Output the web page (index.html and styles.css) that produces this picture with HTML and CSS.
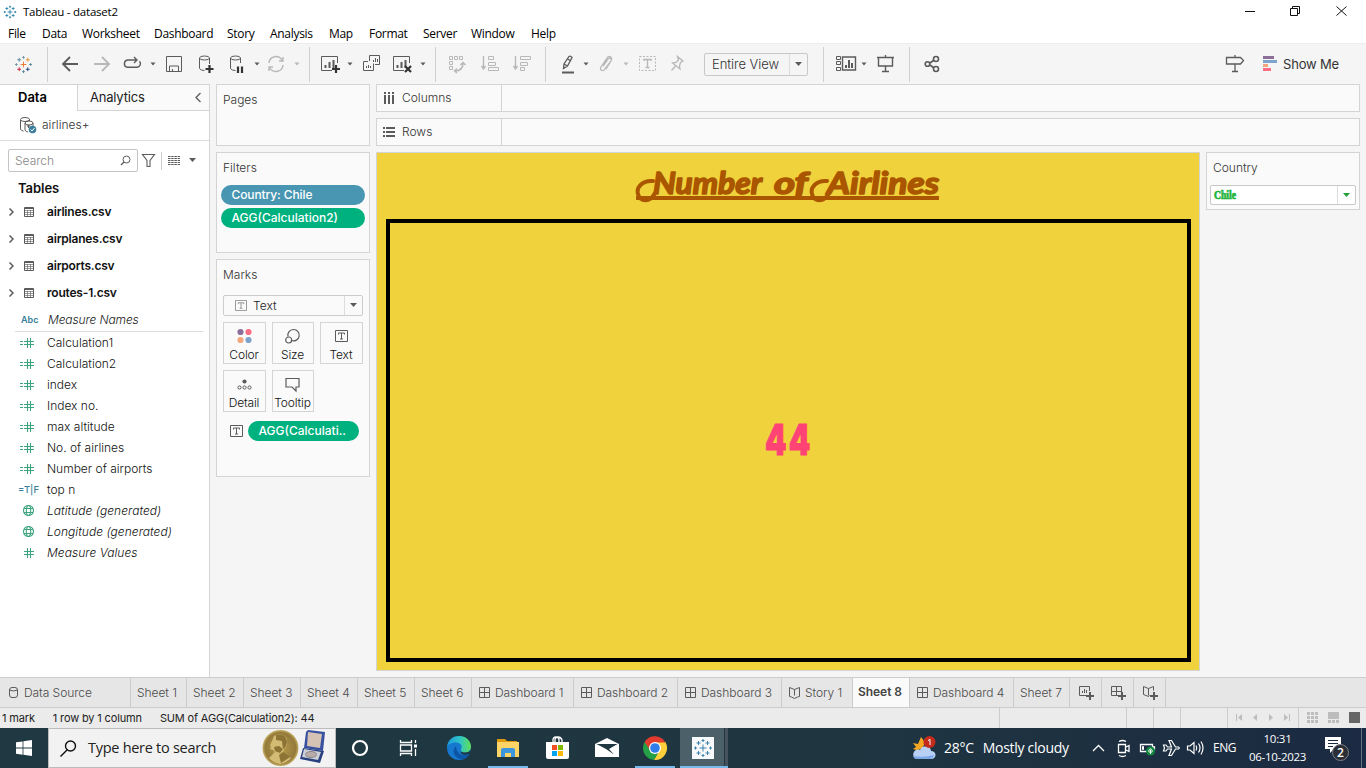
FILE: index.html
```html
<!DOCTYPE html>
<html lang="en">
<head>
<meta charset="utf-8">
<title>Tableau - dataset2</title>
<link rel="stylesheet" href="styles.css">
</head>
<body>
<svg class="defs" aria-hidden="true">
  <symbol id="tableau" viewBox="0 0 20 20"><path d="M10 6.500v7M6.500 10h7"/><path d="M5.500 3v4M3.500 5h4M14.500 3v4M12.500 5h4M5.500 13v4M3.500 15h4M14.500 13v4M12.500 15h4M10 1v3M8.500 2.500h3M10 16v3M8.500 17.500h3M1 10h3M2.500 8.500v3M16 10h3M17.500 8.500v3"/></symbol>
  <symbol id="caret" viewBox="0 0 6 20"><path d="M0.500 8.500h5l-2.500 3z" fill="currentColor" stroke="none"/></symbol>
  <symbol id="grid" viewBox="0 0 12 12"><path d="M.5.500h10v10H.5zM5.500.500v10M.5 5.500h10"/></symbol>
  <symbol id="book" viewBox="0 0 12 12"><path d="M5.500 2.500L3 1.500.5.500v9l2 .5 3 1.500 3-1.500 2-.5v-9l-2.500 1zM5.500 2.500v6"/></symbol>
  <symbol id="calc" viewBox="0 0 14 11"><path d="M0 4.500h3M0 7.500h3M4 4.500h10M4 7.500h10M7.500 1v10M10.500 1v10"/></symbol>
  <symbol id="hash" viewBox="0 0 14 11"><path d="M4 4.500h10M4 7.500h10M7.500 1v10M10.500 1v10"/></symbol>
  <symbol id="globe" viewBox="0 0 14 11"><circle cx="8.500" cy="5.500" r="5"/><path d="M4 3.500h9M4 7.500h9"/><ellipse cx="8.500" cy="5.500" rx="2.200" ry="5"/></symbol>
  <symbol id="table" viewBox="0 0 11 10"><path d="M.5.500h9v9H.5zM.5 1.500h9"/><path stroke-width=".6" d="M0 3.500h10M0 5.500h10M0 7.500h10M3.500 3v7M6.500 3v7"/></symbol>
  <symbol id="tbox" viewBox="0 0 13 12"><path d="M.5.500h12v11H.5z"/><path d="M3.500 4.500v-1.500h6v1.500M6.500 3v6M5 9h3"/></symbol>
  <symbol id="chev" viewBox="0 0 5 8"><path d="M.5.500L4 4 .5 7.500" stroke-width="1.500"/></symbol>
  <symbol id="chart" viewBox="0 0 20 20"><path d="M16.500 9V2.500H.5v14H11"/><path d="M4.500 14v-3M8.500 14V8M12.500 14V6" stroke-width="2"/></symbol>
</svg>

<header class="titlebar">
  <svg class="appicon line" viewBox="0 0 20 20"><use href="#tableau"/></svg>
  <span class="apptitle">Tableau - dataset2</span>
  <svg class="winbtns line" viewBox="0 0 104 12"><path d="M0 5.500h10M45.500 2.500h7v7h-7zM47.500 2V.5h7v7H53M91.500.500l10 9M101.500.500l-10 9"/></svg>
</header>

<nav class="menubar">
  <span>File</span><span>Data</span><span>Worksheet</span><span>Dashboard</span><span>Story</span><span>Analysis</span><span>Map</span><span>Format</span><span>Server</span><span>Window</span><span>Help</span>
</nav>

<div class="toolbar">
  <svg class="i logo line" viewBox="0 0 20 20"><path stroke="#e8762d" d="M10 7v6M7 10h6"/><path stroke="#c72035" d="M5.500 13v4M3.500 15h4"/><path stroke="#5b879b" d="M5.500 3v4M3.500 5h4"/><path stroke="#59879b" d="M10 16v3M8.500 17.500h3M17.500 8.500v3M16 10h3"/><path stroke="#1f457e" d="M14.500 13v4M12.500 15h4"/><path stroke="#eb912c" d="M14.500 3v4M12.500 5h4"/><path stroke="#7199a6" d="M10 1v3M8.500 2.500h3M1 10h3M2.500 8.500v3"/></svg>
  <i class="sep"></i>
  <svg class="i line thick" viewBox="0 0 20 20"><path d="M16 10H1M8 3L1 10l7 7"/></svg>
  <svg class="i line thick off" viewBox="0 0 20 20"><path d="M0 10h15M8 3l7 7-7 7"/></svg>
  <svg class="i line" viewBox="0 0 20 20"><path stroke-width="1.400" d="M14 6H4.500a3.700 3.700 0 0 0 0 7.300H14a3.600 3.600 0 0 0 2.500-6M11 3l3 3-3 3"/></svg>
  <svg class="c"><use href="#caret"/></svg>
  <svg class="i line" viewBox="0 0 20 20"><path d="M.5 2.500h15v15H.5zM3.500 17v-5h9v5M6.500 17v-2"/></svg>
  <svg class="i line" viewBox="0 0 20 20"><ellipse cx="5.500" cy="4" rx="5" ry="2"/><path d="M.5 4v10.500q1 2 5 2M10.500 4v6"/><path class="ink" d="M10.500 11v8M6.500 15h8"/></svg>
  <svg class="i line" viewBox="0 0 20 20"><ellipse cx="5.500" cy="4" rx="5" ry="2"/><path d="M.5 4v10.500q1 2 5 2M10.500 4v5"/><path class="ink" d="M8 12.500v6.500M12 12.500v6.500"/></svg>
  <svg class="c"><use href="#caret"/></svg>
  <svg class="i line off" viewBox="0 0 20 20"><path stroke-width="1.400" d="M2 9a7 7 0 0 1 13-3M16 3v4h-4M16 11a7 7 0 0 1-13 3M2 17v-4h4"/></svg>
  <svg class="c off"><use href="#caret"/></svg>
  <i class="sep"></i>
  <svg class="i line" viewBox="0 0 20 20"><use href="#chart"/><path class="ink" d="M15 11v8M11 15h8"/></svg>
  <svg class="c"><use href="#caret"/></svg>
  <svg class="i line" viewBox="0 0 20 20"><path d="M6.500 7V1.500h10v9H12M5 7.500H.5v9h10v-7M3.500 14v-2M5.500 14v-3M7.500 14v-2M10.500 8V6M12.500 8V4M14.500 8V5"/></svg>
  <svg class="i line" viewBox="0 0 20 20"><use href="#chart"/><path class="ink" d="M12 12l6 6M18 12l-6 6"/></svg>
  <svg class="c"><use href="#caret"/></svg>
  <i class="sep"></i>
  <svg class="i line off" viewBox="0 0 20 20"><path d="M1.500 2.500h3v3h-3zM6.500 2.500h3v3h-3zM11.500 2.500h3v3h-3zM1.500 7.500h3v3h-3zM1.500 12.500h3v3h-3z"/><path stroke-width="1.500" d="M7 17q8 0 8-8M12.500 11L15 8.500l2.500 2.500M9 14.500L6.500 17 9 19"/></svg>
  <svg class="i line off" viewBox="0 0 20 20"><path stroke-width="1.400" d="M2.500 2v13M.5 12l2 3 2-3"/><path d="M7.500 2.500h5v3h-5zM7.500 8.500h7v3h-7zM7.500 13.500h10v3h-10z"/></svg>
  <svg class="i line off" viewBox="0 0 20 20"><path stroke-width="1.400" d="M2.500 2v13M.5 12l2 3 2-3"/><path d="M7.500 2.500h10v3h-10zM7.500 8.500h7v3h-7zM7.500 13.500h4v3h-4z"/></svg>
  <i class="sep"></i>
  <svg class="i line" viewBox="0 0 20 20"><path stroke-width="1.300" d="M2.500 14.500l.5-4.500 5-7.500q1.500-1 3 1L6.500 12zM3 10l3.500 2M6.500 5l3.500 2"/><path stroke-width="2" d="M1 18.500h12"/></svg>
  <svg class="c"><use href="#caret"/></svg>
  <svg class="i line off" viewBox="0 0 20 20"><path stroke-width="1.300" d="M4 12l5-7c2-2 4 0 3 2l-6 8c-2 3-6 1-4-2l6-9c2-3 6-1 4 3l-5 8"/></svg>
  <svg class="c off"><use href="#caret"/></svg>
  <svg class="i line off" viewBox="0 0 20 20"><path stroke-dasharray="2 1.500" d="M.5 2.500h16v14H.5z"/><path d="M5 7V5.500h7V7M8.500 5v9M6.500 13.500h4" stroke-width="1.400"/></svg>
  <svg class="i line off" viewBox="0 0 20 20"><path stroke-width="1.300" d="M6.500 2.500l5.500 4.500-2.500 1.500-1 3.500.5 3-7.500-6 3.500-.5 2.500-2.500zM4.500 12L.5 16.500"/></svg>
  <div class="fit"><span>Entire View</span><b><svg class="arrow" viewBox="0 0 8 5"><path d="M0 0h7L3.500 4z"/></svg></b></div>
  <i class="sep"></i>
  <svg class="i line" viewBox="0 0 20 20"><path d="M.5 2.500h4v3h-4zM.5 7.500h4v3h-4zM.5 13.500h4v3h-4z"/><path stroke-width="1.400" d="M6.500 3h13v13h-13z"/><path stroke-width="2" d="M10 14v-3M13 14V6M16 14V9"/></svg>
  <svg class="c"><use href="#caret"/></svg>
  <svg class="i line" viewBox="0 0 20 20"><path stroke-width="1.400" d="M0 3.500h17M1.500 3v9h14V3M8.500 12v5.500M5 17.500h7M8.500 1v2"/></svg>
  <i class="sep"></i>
  <svg class="i line" viewBox="0 0 20 20"><g stroke-width="1.600"><circle cx="3.500" cy="10" r="2.300"/><circle cx="12" cy="5" r="2.500"/><circle cx="12" cy="15" r="2.500"/><path d="M6 9l4-3M6 11l4 3"/></g></svg>
  <svg class="i line" viewBox="0 0 20 20"><path stroke-width="1.300" d="M.5 3.500h14l3 3-3 3.500H.5zM9 1v2M9 10v8M6 17.500h6"/></svg>
  <span class="showme"><svg width="15" height="16" viewBox="0 0 15 16"><path fill="#8b6f98" d="M0 0h11v3H0z"/><path fill="#7ea3cc" d="M0 4h14v3H0z"/><path fill="#f5a67c" d="M0 8h5v3H0z"/><path fill="#fa6f85" d="M0 12h8v3H0z"/></svg><span>Show Me</span></span>
</div>

<main class="work">
  <aside class="side">
    <div class="sidetabs"><b>Data</b><span>Analytics<svg class="line" width="7" height="10" viewBox="0 0 7 10"><path stroke-width="1.300" d="M5.500 0L1 4.500 5.500 9"/></svg></span></div>
    <div class="source"><svg class="line" width="17" height="17" viewBox="0 0 17 17"><ellipse cx="5" cy="2.500" rx="4.500" ry="2"/><path d="M.5 3v9q1 2 3 2M9.500 2v2"/><ellipse cx="9" cy="6" rx="4" ry="2"/><path d="M5 6v7q1 2 3 2M13 6v3M7 9h3M8.500 8v3"/><circle cx="12.500" cy="12.500" r="3.800" fill="#3b7f9c" stroke="none"/><path stroke="#fff" d="M10.500 12.500l1.500 1.500 2.500-3"/></svg><span>airlines+</span></div>
    <div class="find">
      <div class="searchbox"><span>Search</span><svg class="line" width="11" height="11" viewBox="0 0 11 11"><circle cx="6.500" cy="4.500" r="3.500"/><path stroke-width="1.300" d="M4 7L1 10"/></svg></div>
      <svg class="line" width="13" height="13" viewBox="0 0 13 13"><path stroke-width="1.100" d="M.5.500h12l-4.500 6v6h-3v-6z"/></svg>
      <i></i>
      <svg class="line" width="12" height="10" viewBox="0 0 12 10"><path stroke-dasharray="2.500 .7" d="M0 .5h12M0 2.500h12M0 4.500h12M0 6.500h12M0 8.500h12"/></svg>
      <svg class="arrow" viewBox="0 0 8 5"><path d="M0 0h7L3.500 4z"/></svg>
    </div>
    <h2>Tables</h2>
    <ul class="tables">
      <li><svg class="chev line"><use href="#chev"/></svg><svg class="tab line"><use href="#table"/></svg><b>airlines.csv</b></li>
      <li><svg class="chev line"><use href="#chev"/></svg><svg class="tab line"><use href="#table"/></svg><b>airplanes.csv</b></li>
      <li><svg class="chev line"><use href="#chev"/></svg><svg class="tab line"><use href="#table"/></svg><b>airports.csv</b></li>
      <li><svg class="chev line"><use href="#chev"/></svg><svg class="tab line"><use href="#table"/></svg><b>routes-1.csv</b></li>
    </ul>
    <div class="names"><small>Abc</small><em>Measure Names</em></div>
    <ul class="fields">
      <li><svg><use href="#calc"/></svg><span>Calculation1</span></li>
      <li><svg><use href="#calc"/></svg><span>Calculation2</span></li>
      <li><svg><use href="#calc"/></svg><span>index</span></li>
      <li><svg><use href="#calc"/></svg><span>Index no.</span></li>
      <li><svg><use href="#calc"/></svg><span>max altitude</span></li>
      <li><svg><use href="#calc"/></svg><span>No. of airlines</span></li>
      <li><svg><use href="#calc"/></svg><span>Number of airports</span></li>
      <li><small>=T|F</small><span>top n</span></li>
      <li><svg><use href="#globe"/></svg><em>Latitude (generated)</em></li>
      <li><svg><use href="#globe"/></svg><em>Longitude (generated)</em></li>
      <li><svg><use href="#hash"/></svg><em>Measure Values</em></li>
    </ul>
  </aside>

  <section class="cards">
    <div class="card pages"><h3>Pages</h3></div>
    <div class="card filters"><h3>Filters</h3><p class="pill blue">Country: Chile</p><p class="pill">AGG(Calculation2)</p></div>
    <div class="card marks">
      <h3>Marks</h3>
      <div class="marktype"><svg class="line dim" width="12" height="11" viewBox="0 0 13 12"><use href="#tbox" width="13" height="12"/></svg><span>Text</span><b><svg class="arrow" viewBox="0 0 8 5"><path d="M0 0h7L3.500 4z"/></svg></b></div>
      <div class="markgrid">
        <div><svg width="15" height="15" viewBox="0 0 15 15"><circle cx="3.500" cy="3" r="3.100" fill="#8b6f98"/><circle cx="11.500" cy="3" r="3.100" fill="#fa6f85"/><circle cx="3.500" cy="11" r="3.100" fill="#f5a67c"/><circle cx="11.500" cy="11" r="3.100" fill="#7ea3cc"/></svg><span>Color</span></div>
        <div><svg class="line" width="15" height="15" viewBox="0 0 15 15"><path stroke-width="1.200" d="M3 7.500A5.700 5.700 0 1 1 6.500 11.500"/><circle cx="3.700" cy="11" r="3" stroke-width="1.200"/></svg><span>Size</span></div>
        <div><svg class="line" width="13" height="15" viewBox="0 0 13 15"><use href="#tbox" width="13" height="12" y="1"/></svg><span>Text</span></div>
        <div><svg class="line" width="15" height="15" viewBox="0 0 15 15"><circle cx="7.500" cy="4.500" r="2.100" fill="#5b5b5b" stroke="none"/><circle cx="2.500" cy="10.500" r="1.600"/><circle cx="7.500" cy="10.500" r="1.600"/><circle cx="12.500" cy="10.500" r="1.600"/></svg><span>Detail</span></div>
        <div><svg class="line" width="15" height="15" viewBox="0 0 15 15"><path stroke-width="1.200" d="M1 1.500h13v8.500h-3v4l-4-4H1z"/></svg><span>Tooltip</span></div>
      </div>
      <div class="encoded"><svg class="line" width="13" height="12" viewBox="0 0 13 12"><use href="#tbox" width="13" height="12"/></svg><p class="pill">AGG(Calculati..</p></div>
    </div>
  </section>

  <section class="view">
    <div class="shelf"><span><svg class="solid" width="12" height="12" viewBox="0 0 12 12"><path d="M1 0h2v2H1zM5 0h2v2H5zM9 0h2v2H9zM1 3h2v9H1zM5 3h2v9H5zM9 3h2v9H9z"/></svg>Columns</span></div>
    <div class="shelf"><span><svg class="solid" width="12" height="12" viewBox="0 0 12 12"><path d="M0 1h2v2H0zM0 5h2v2H0zM0 9h2v2H0zM3 1h9v2H3zM3 5h9v2H3zM3 9h9v2H3z"/></svg>Rows</span></div>
    <div class="stage">
      <div class="viz">
        <svg class="vtitle" viewBox="0 0 340 60" width="340" height="60">
          <path d="M33 22C23 21 16 28 18 35C20 43 30 44 35 34M207 22C197 21 190 28 192 35C194 43 204 44 209 34" />
          <path class="rule" d="M16 39h303"/>
          <text x="33" y="35" textLength="109" lengthAdjust="spacingAndGlyphs">Number</text>
          <text x="154" y="35" textLength="34" lengthAdjust="spacingAndGlyphs">of</text>
          <text x="207" y="35" textLength="112" lengthAdjust="spacingAndGlyphs">Airlines</text>
        </svg>
        <div class="pane"><svg width="60" height="44" viewBox="0 0 60 44"><text transform="translate(6 36) scale(.73 1)">44</text></svg></div>
      </div>
      <div class="legend"><h3>Country</h3><div class="pick"><svg width="24" height="14" viewBox="0 0 24 14"><text x="0" y="11" textLength="22" lengthAdjust="spacingAndGlyphs">Chile</text></svg><b><svg class="arrow" viewBox="0 0 8 5"><path d="M0 0h7L3.500 4z"/></svg></b></div></div>
    </div>
  </section>
</main>

<div class="sheets">
  <span class="ds"><svg class="line" width="9" height="12" viewBox="0 0 9 12"><rect x=".5" y=".5" width="8" height="10" rx="2.500"/><path d="M.5 3q4 2 8 0"/></svg>Data Source</span>
  <span>Sheet 1</span><span>Sheet 2</span><span>Sheet 3</span><span>Sheet 4</span><span>Sheet 5</span><span>Sheet 6</span>
  <span class="ic"><svg class="line"><use href="#grid"/></svg>Dashboard 1</span>
  <span class="ic"><svg class="line"><use href="#grid"/></svg>Dashboard 2</span>
  <span class="ic"><svg class="line"><use href="#grid"/></svg>Dashboard 3</span>
  <span class="ic"><svg class="line"><use href="#book"/></svg>Story 1</span>
  <span class="on">Sheet 8</span>
  <span class="ic"><svg class="line"><use href="#grid"/></svg>Dashboard 4</span>
  <span>Sheet 7</span>
  <span class="add"><svg class="line" viewBox="0 0 16 16"><path d="M10.500 6V1.500H.5v9H7M3.500 8V6M5.500 8V4M7.500 8V5"/><path stroke-width="2" d="M11 7v8M7 11h8"/></svg></span>
  <span class="add"><svg class="line" viewBox="0 0 16 16"><path d="M10.500 6V1.500H.5v9H7M5.500 1v9M0 6.500h11"/><path stroke-width="2" d="M11 7v8M7 11h8"/></svg></span>
  <span class="add"><svg class="line" viewBox="0 0 16 16"><path d="M5.500 3.500L.5 1.500v8l5 2 1-1M5.500 3.500v7M5.500 3.500l5-2v4"/><path stroke-width="2" d="M11 7v8M7 11h8"/></svg></span>
</div>

<div class="status">
  <span class="msg"><span>1 mark</span><span>1 row by 1 column</span><span>SUM of AGG(Calculation2): 44</span></span>
  <i></i><i></i><i></i><i></i>
  <i><svg width="54" height="8" viewBox="0 0 54 8" fill="#bdbdbd"><path d="M0 0h1v7H0zM6 0v7L2 3.500zM21 0v7l-4-3.500zM33 0v7l4-3.500zM48 0v7l4-3.500zM53 0h1v7h-1z"/></svg></i>
  <i class="modes"><svg width="54" height="11" viewBox="0 0 54 11" fill="#bdbdbd"><path d="M0 0h3v3H0zM4 0h3v3H4zM8 0h3v3H8zM0 4h3v3H0zM4 4h3v3H4zM8 4h3v3H8zM0 8h3v3H0zM4 8h3v3H4zM8 8h3v3H8zM21 0h11v7H21zM21 8h3v3h-3zM25 8h3v3h-3zM29 8h3v3h-3z"/><path fill="#666" d="M42 0h11v11H42z"/></svg></i>
</div>

<footer class="taskbar">
  <div class="start"><svg width="16" height="16" viewBox="0 0 16 16" fill="#fff"><path d="M0 2.300l6.600-.9v6.200H0zM7.400 1.300L16 0v7.600H7.400zM0 8.400h6.600v6.300L0 13.800zM7.400 8.400H16V16l-8.600-1.200z"/></svg></div>
  <div class="winsearch">
    <svg class="line dark" width="17" height="17" viewBox="0 0 17 17"><circle cx="10.500" cy="6" r="5" stroke-width="1.400"/><path stroke-width="1.500" d="M7 10L.5 16.500"/></svg>
    <span>Type here to search</span>
    <svg class="award" width="66" height="38" viewBox="0 0 66 38"><defs><radialGradient id="gold"><stop offset="0" stop-color="#b99d50"/><stop offset=".85" stop-color="#94793a"/><stop offset="1" stop-color="#c7b166"/></radialGradient></defs><circle cx="18.500" cy="19" r="18" fill="url(#gold)"/><path fill="#d2bb72" d="M12 7q8-4 13 3 1 6-3 10l-1 4 8 5q-4 5-11 6-7-1-11-6l6-6-2-2-3-1 1-2-1-2 2-4z"/><path fill="#8d7334" d="M14 6q9-2 11 6 0 5-4 8l-1-8-6-1zM12 18l5-1 4 3-3 4-5-2zM17 26l4-3 7 5-9 6z"/><path fill="#3850a0" d="M44 3l2-2 17 2-2 19-19-3z"/><path fill="#d5c2b4" d="M46 3l14 2-2 14-13-2z"/><path fill="#28407e" d="M41 19l21 3-4 12-20-4z"/><path fill="#cdd0d8" d="M42 20l17 3-3 8-16-3z"/><ellipse cx="49" cy="25.500" rx="5.500" ry="3" fill="#b9ada9" stroke="#8b8587"/></svg>
  </div>
  <div class="apps">
    <div><svg width="18" height="18" viewBox="0 0 18 18"><circle cx="9" cy="9" r="7" fill="none" stroke="#fff" stroke-width="2.200"/></svg></div>
    <div><svg width="18" height="18" viewBox="0 0 18 18" fill="none" stroke="#fff" stroke-width="1.300"><path d="M1.500 1v2.500h11V1M1.500 17v-2.500h11V17M1.500 6h11v6h-11zM16.500 1v3M16.500 10v7"/><path d="M15 7h3" stroke-width="3"/></svg></div>
    <div><svg width="24" height="24" viewBox="0 0 24 24"><defs><linearGradient id="ed"><stop offset="0" stop-color="#1c9bdc"/><stop offset=".55" stop-color="#2fc5c5"/><stop offset="1" stop-color="#60df55"/></linearGradient></defs><circle cx="12" cy="12" r="12" fill="#1678ce"/><path fill="url(#ed)" d="M0 11C1 3 7 0 12 0c7 0 12 5 12 10.500 0 4-3 6-6 6-3.500 0-5-1-4-3 2-4-1-7-5-7C5 6.500 1 8 0 11z"/><path fill="#0d55a6" d="M9 10c-5 4-2 11 4 13 4 1 8-2 9.500-5-6 3-13 1-13.500-8z"/><path class="gap" d="M24 13q-2 4-6 3.500-4 0-4-2-1 3 2 4 4 1 7-1z"/></svg></div>
    <div class="open files"><svg width="24" height="22" viewBox="0 0 24 22"><path fill="#dd9a0c" d="M1 2h8l2 2h10v5H1z"/><path fill="#fbd367" d="M1 5h22v15H1z"/><path fill="#3b96dd" d="M5 20v-7q0-2 2-2h10q2 0 2 2v7h-4v-4H9v4z"/></svg></div>
    <div><svg width="24" height="24" viewBox="0 0 24 24"><path fill="none" stroke="#fff" stroke-width="1.300" d="M8 7V4q0-3 3-3t3 3v3M10 7V4q0-3 3-3t4 3v3"/><path fill="#fff" d="M1 6h23v15q0 2-2 2H3q-2 0-2-2z"/><path fill="#f25022" d="M7 9h5v5H7z"/><path fill="#7fba00" d="M13 9h5v5h-5z"/><path fill="#00a4ef" d="M7 15h5v5H7z"/><path fill="#ffb900" d="M13 15h5v5h-5z"/></svg></div>
    <div><svg width="24" height="20" viewBox="0 0 24 20"><path fill="#fff" d="M0 6l12-6 12 6v13H0z"/><path class="gap" d="M1.500 6h21L14 11l5 5.500L11 11z"/></svg></div>
    <div class="open chrome"><svg width="24" height="24" viewBox="0 0 24 24"><path fill="#26a047" d="M12 12L8 23.300A12 12 0 0 1 1.600 6z"/><path fill="#fdd03b" d="M12 12V6h10.400A12 12 0 0 1 11 24l5-9z"/><path fill="#26a047" d="M7 14l4 4 4-1-4 7-4-1-4-8z"/><path fill="#e33b2e" d="M1.600 6A12 12 0 0 1 22.400 6.500H12L7 14z"/><circle cx="12" cy="12" r="6" fill="#fff"/><circle cx="12" cy="12" r="4.800" fill="#317de9"/></svg></div>
    <div class="open active"><svg width="22" height="22" viewBox="-1 -1 22 22" class="line tb"><path fill="#f7f9fa" stroke="none" d="M-1-1h22v22H-1z"/><use href="#tableau" width="20" height="20"/></svg></div>
  </div>
  <div class="weather"><svg width="26" height="24" viewBox="0 0 26 24"><path fill="#f5a623" d="M10 1q5 5 2 10-4 5-10 2l3-2-3-4 5 1z"/><path fill="#b9d0f5" d="M5 23a5 5 0 0 1 0-9q2-1 4 0c3-6 11-4 11 1 6 0 6 8 0 8z"/><path fill="#7ea9e8" d="M2 20q10 2 21-1-1 4-4 4H5q-2 0-3-3z"/><circle cx="18.500" cy="6" r="6" fill="#c42b1c"/><path stroke="#fff" fill="none" d="M17 4.500l2-1V9"/></svg><span>28°C</span><span>Mostly cloudy</span></div>
  <svg class="tray line" width="112" height="20" viewBox="0 0 112 20"><path stroke-width="1.300" d="M1 13l5.500-5.500L12 13"/><path stroke-width="1.300" d="M26.500 6.500h7v8h-7zM34 9l3-1.500v6L34 12M27 3.500q3.500-2 7 0M27 17.500q3.500 2 7 0"/><path stroke-width="1.300" d="M48.500 6.500h12v7h-12zM61 9h1.500v2H61"/><path fill="#fff" d="M50.500 8.500h1v3h-1z"/><circle cx="58.500" cy="13" r="4.500" fill="#10893e" stroke="none"/><path d="M58.500 16v-4M56.500 13l2-2.500 2 2.500-2 2z"/><path stroke-width="1.200" d="M71.500 7H74l1.500 2h4L77 2.500h2.500l4 6.500h3q1.500 1 0 2h-3l-4 6.500H77l2.500-6.500h-4L74 13h-2.500l1-3z"/><path stroke-width="1.200" d="M95.500 8h2.500l4-3.500v11L98 12h-2.500zM104 7.500q1.500 2.500 0 5M106.500 5.500q3 4.500 0 9M109 3.500q4 6.500 0 13"/></svg>
  <span class="lang">ENG</span>
  <div class="clock"><span>10:31</span><span>06-10-2023</span></div>
  <svg class="note" width="26" height="26" viewBox="0 0 26 26"><path fill="#fff" d="M0 2h16v12H9l-4 4v-4H0z"/><path stroke="#1c2a40" d="M3 5.500h10M3 8.500h10M3 11.500h5"/><circle cx="15.500" cy="17.500" r="8" fill="#2b2f35" stroke="#7b808a"/><text x="15.500" y="22">2</text></svg>
  <i class="peek"></i>
</footer>
</body>
</html>
```
FILE: styles.css
```css
* { box-sizing: border-box; }
body { margin: 0; width: 1366px; height: 768px; overflow: hidden; display: flex; flex-direction: column; background: #f5f5f5; font: 300 12px/16px Inter, sans-serif; color: #222; }
h2, h3, p, ul { margin: 0; padding: 0; list-style: none; }
span, b, em { white-space: nowrap; }
svg { display: block; flex: none; overflow: visible; }
.defs { position: absolute; width: 0; height: 0; }
.line { fill: none; stroke: #5b5b5b; stroke-width: 1; }
.off { color: #b8b8b8; stroke: #b8b8b8; }
.dark { stroke: #111; }
.dim { opacity: .65; }
.solid { fill: #5b5b5b; }
.arrow { width: 8px; height: 5px; fill: #5b5b5b; }

.titlebar, .menubar { background: #fff; font-family: "Open Sans", sans-serif; font-weight: 400; color: #000; }
.titlebar { height: 22px; padding: 1px 0 0 3px; display: flex; align-items: center; }
.appicon { width: 14px; height: 14px; stroke: #2a83ac; stroke-width: 1.3; }
.apptitle { margin-left: 6px; font-size: 11.5px; letter-spacing: -.22px; flex: 1; }
.winbtns { width: 104px; height: 12px; margin-right: 17px; stroke: #111; }
.menubar { height: 21px; display: grid; align-items: center; padding: 3px 0 0 8px; font-size: 12px; letter-spacing: -.3px; grid-template-columns: 34px 40px 72px 73px 43px 59px 40px 54px 48px 60px 40px; }

.toolbar { height: 41px; border-top: 1px solid #ececec; padding-left: 14px; display: grid; align-items: center; grid-template-columns: 33px 15px 32px 29px 27px 16px 33px 31px 24px 13px 27px 15px 12px 26px 16px 30px 27px 15px 13px 33px 32px 32px 16px 22px 16px 24px 16px 32px 33px 119px 13px 25px 16px 32px 15px 302px 37px 80px; color: #5b5b5b; }
.i { width: 20px; height: 20px; }
.c { width: 6px; height: 20px; }
.logo { width: 19px; height: 19px; }
.thick { stroke-width: 1.8; }
.ink { stroke: #333; stroke-width: 2.2; }
.sep { width: 1px; height: 35px; background: #d0d0d0; }
.fit { width: 104px; height: 23px; border: 1px solid #c8c8c8; border-radius: 2px; display: flex; align-items: center; font-size: 13px; color: #333; }
.fit span { flex: 1; padding-left: 7px; letter-spacing: -.05px; }
.fit b, .marktype b, .pick b { width: 18px; align-self: stretch; border-left: 1px solid #ddd; display: flex; align-items: center; padding-left: 5px; }
.showme { display: flex; gap: 5px; align-items: center; font-size: 13px; font-weight: 400; letter-spacing: -.2px; padding-bottom: 1px; color: #333; }

.work { height: 593px; display: flex; }
.side { width: 210px; background: #fff; border-right: 1px solid #d4d4d4; border-top: 1px solid #d4d4d4; }
.sidetabs { height: 26px; display: flex; font-size: 13px; line-height: 25px; }
.sidetabs b { width: 77px; padding-left: 18px; font-weight: 600; color: #000; }
.sidetabs span { flex: 1; border-left: 1px solid #d4d4d4; border-bottom: 1px solid #d4d4d4; background: #fafafa; padding: 0 7px 0 12px; display: flex; justify-content: space-between; align-items: center; letter-spacing: -.2px; font-weight: 400; }
.source { height: 30px; border-bottom: 1px solid #ddd; display: flex; align-items: center; gap: 5px; padding: 0 0 1px 20px; color: #333; }
.find { display: flex; align-items: center; padding: 8px 0 0 8px; height: 31px; }
.searchbox { width: 130px; height: 23px; border: 1px solid #c4c4c4; border-radius: 2px; display: flex; align-items: center; justify-content: space-between; padding: 0 6px; margin-right: 4px; color: #858585; }
.find i { width: 1px; height: 18px; background: #ccc; margin: 0 6px; }
.find .arrow { margin-left: 9px; }
.side h2 { font-size: 13px; font-weight: 600; color: #111; line-height: 20px; margin: 6px 0 0 18px; letter-spacing: -.05px; }
.tables li { height: 27px; display: flex; align-items: center; padding-left: 9px; color: #111; }
.tables b { font-weight: 600; margin-left: 12px; letter-spacing: -.2px; }
.chev { width: 5px; height: 8px; }
.tab { width: 11px; height: 10px; margin-left: 10px; }
.names { height: 26px; margin: 0 6px 0 15px; border-bottom: 1px solid #ddd; display: flex; align-items: center; padding-top: 2px; }
.names small { color: #3b7f9c; font-size: 9px; font-weight: 600; width: 33px; padding-left: 6px; }
.names em { letter-spacing: -.12px; }
.fields { color: #111; }
.fields em { letter-spacing: .04px; }
.fields li { height: 21px; display: flex; align-items: center; padding-left: 20px; }
.fields svg { width: 14px; height: 11px; margin-right: 13px; fill: none; stroke: #3ea47f; stroke-width: 1.1; }
.fields small { width: 29px; margin-left: -2px; font-size: 9.5px; color: #3b7f9c; font-weight: 500; }

.cards { width: 166px; padding: 0 0 0 6px; display: flex; flex-direction: column; gap: 6px; }
.card { width: 154px; border: 1px solid #d4d4d4; background: #fafafa; }
h3 { font: 300 12px/16px Inter, sans-serif; color: #333; margin: 7px 0 0 6px; }
.pages { height: 62px; }
.filters { height: 101px; }
.marks { height: 218px; }
.pill { width: 144px; height: 20px; border-radius: 10px; background: #00b180; color: #fff; font-weight: 500; padding-left: 10.5px; line-height: 20px; margin: 3px 0 0 4px; }
.filters h3 { margin-bottom: 9px; }
.blue { background: #4996b2; letter-spacing: -.1px; }
.marktype { width: 140px; height: 21px; border: 1px solid #ccc; border-radius: 2px; margin: 12px 0 6px 6px; padding-left: 11px; display: flex; align-items: center; gap: 6px; }
.marktype span { flex: 1; }
.markgrid { display: grid; grid-template-columns: 43px 42px 43px; gap: 6px; margin-left: 6px; color: #111; }
.markgrid div { height: 42px; border: 1px solid #d4d4d4; display: flex; flex-direction: column; align-items: center; padding: 6px 1px 0 0; gap: 3px; letter-spacing: -.15px; }
.encoded { display: flex; align-items: center; padding-left: 13px; gap: 5px; margin-top: 9px; }
.encoded .pill { width: 111px; margin: 0; }

.view { flex: 1; display: flex; flex-direction: column; gap: 6px; }
.shelf { width: 984px; height: 28px; border: 1px solid #d4d4d4; background: #fafafa; }
.shelf span { width: 125px; height: 26px; display: flex; align-items: center; gap: 7px; padding-left: 6px; border-right: 1px solid #d4d4d4; color: #333; }
.stage { display: flex; gap: 6px; }
.viz { width: 824px; height: 519px; background: #f0d23c; border: 1px solid #d4d4d4; padding: 6px 8px 8px 9px; }
.vtitle { margin-left: 234px; fill: none; stroke: #aa5500; stroke-width: 4; stroke-linecap: round; }
.vtitle .rule { stroke-width: 4; stroke-linecap: butt; }
.vtitle text { fill: #aa5500; stroke-width: 1.6; stroke-linejoin: round; font: italic 700 31px Lato, sans-serif; }
.pane { height: 443px; border: 4px solid #000; display: flex; align-items: center; justify-content: center; }
.pane text { font: 900 42px Inter, sans-serif; letter-spacing: 3px; fill: #ff4475; stroke: #ff4475; stroke-width: 1; }
.legend { width: 154px; height: 58px; border: 1px solid #d4d4d4; background: #fafafa; }
.pick { width: 146px; height: 20px; border: 1px solid #c8c8c8; border-radius: 2px; background: #fff; margin: 9px 0 0 3px; display: flex; align-items: center; justify-content: space-between; padding-left: 3px; }
.pick text { font: 900 12px "Liberation Serif", serif; fill: #21b43a; stroke: #21b43a; stroke-width: .7; }
.pick .arrow { fill: #21a03a; }

.sheets { height: 31px; border-top: 1px solid #ccc; border-bottom: 1px solid #ccc; background: #e6e6e6; display: grid; grid-template-columns: 131px 56px repeat(5, 57px) 102px 104px 104px 71px 57px 104px 56px 32px 32px 32px; color: #4a4a4a; }
.sheets > span { border-right: 1px solid #ccc; padding-left: 6px; display: flex; align-items: center; letter-spacing: -.05px; }
.sheets .ds { gap: 6px; padding-left: 9px; }
.sheets .ic { gap: 4px; padding-left: 7px; }
.sheets .ic svg { width: 12px; height: 12px; }
.sheets .on { background: #fafafa; color: #444; font-weight: 600; padding-left: 5px; padding-bottom: 1px; }
.sheets .add { padding-left: 9px; }
.sheets .add svg { width: 16px; height: 16px; }

.status { height: 20px; background: #ebebeb; display: grid; grid-template-columns: 999px 127px 27px 27px 47px 71px 68px; font-size: 11px; font-weight: 400; color: #222; }
.status i { border-left: 1px solid #ccc; padding: 6px 0 0 8px; }
.status .modes { padding-top: 4px; padding-left: 8px; }
.msg { display: flex; gap: 18px; padding-left: 2px; align-items: center; letter-spacing: -.15px; }

.taskbar { height: 40px; background: linear-gradient(90deg, #1f3841, #1f3640 60%, #1b2a42); display: grid; align-items: center; grid-template-columns: 48px 288px 575px 181px 121px 35px 77px 36px 5px; color: #fff; font-family: "Open Sans", sans-serif; font-weight: 400; }
.start { padding-left: 16px; }
.winsearch { height: 40px; background: #f2f2f2; border: 1px solid #bbb; display: flex; align-items: center; padding-left: 11px; color: #222; font-size: 14.5px; }
.winsearch span { margin-left: 11px; flex: 1; letter-spacing: -.28px; }
.award { margin-right: 7px; }
.apps { height: 40px; display: grid; grid-template-columns: 48px 47px 56px 42px 55px 45px 51px 48px; }
.apps div { display: flex; align-items: center; justify-content: center; }
.gap { fill: #1f3741; }
.apps .open { border-bottom: 2px solid #76b9ed; padding-top: 2px; }
.apps .files { margin: 0 1px; }
.apps .chrome { margin: 0 5px 0 6px; }
.apps .active { background: linear-gradient(90deg, #4c6069 44px, #24353d 44px, #24353d 45px, #46535d 45px); padding-right: 2px; }
.tb { stroke: #2a76a5; stroke-width: .9; }
.weather { display: flex; align-items: center; font-size: 14px; letter-spacing: -.28px; }
.weather span { margin-left: 8px; }
.weather svg + span { margin-left: 7px; }
.weather span + span { margin-left: 9px; }
.tray { stroke: #fff; }
.lang { font-size: 12px; letter-spacing: -.5px; }
.clock { display: flex; flex-direction: column; align-items: center; font-size: 11.5px; line-height: 18px; letter-spacing: -.3px; padding: 0 18px 1px 0; }
.note text { font: 600 12px "Open Sans", sans-serif; fill: #fff; stroke: none; text-anchor: middle; }
.peek { width: 1px; height: 40px; background: #65707e; }
```
